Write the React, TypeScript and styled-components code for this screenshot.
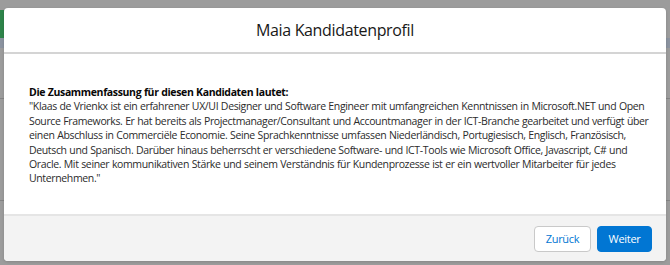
import React from "react";
import styled, { createGlobalStyle } from "styled-components";

const GlobalStyle = createGlobalStyle`
  html, body {
    margin: 0;
    padding: 0;
    width: 670px;
    height: 265px;
    overflow: hidden;
    background: #9a9a9a;
    font-family: "Open Sans", "Noto Sans", Arial, sans-serif;
  }
`;

const Page = styled.div`
  position: relative;
  width: 670px;
  height: 265px;
  overflow: hidden;
  background: #9c9c9c;
`;

const BackdropRows = styled.div`
  display: flex;
  flex-direction: column;
`;

const BackdropRow = styled.div<{ $h: number; $bg: string }>`
  height: ${(p) => p.$h}px;
  background: ${(p) => p.$bg};
  display: flex;
  align-items: flex-end;
`;

const GreenTab = styled.div`
  width: 4px;
  height: 28px;
  background: #2e844a;
`;

const Modal = styled.div`
  position: absolute;
  top: 8px;
  left: 4px;
  width: 662px;
  height: 253px;
  display: flex;
  flex-direction: column;
  background: #fff;
  border-radius: 4px;
  overflow: hidden;
  box-shadow: 0 1px 3px rgba(0, 0, 0, 0.15);
`;

const Header = styled.div`
  height: 44px;
  display: flex;
  align-items: center;
  justify-content: center;
  border-bottom: 2px solid #d4d4d4;
`;

const Title = styled.h2`
  margin: 0;
  font-weight: 400;
  font-size: 16px;
  color: #181818;
  letter-spacing: -0.35px;
`;

const Body = styled.div`
  flex: 1;
  padding: 31px 25px 0 25px;
  font-size: 10.5px;
  line-height: 14.4px;
  letter-spacing: -0.36px;
  word-spacing: 0.3px;
  color: #2b2b2b;
`;

const Lead = styled.div`
  font-weight: 700;
  color: #080707;
`;

const Line = styled.div`
  white-space: nowrap;
`;

const Footer = styled.div`
  height: 45px;
  display: flex;
  align-items: center;
  justify-content: flex-end;
  gap: 6px;
  padding: 0 14px;
  background: #f3f3f3;
  border-top: 2px solid #e5e5e5;
`;

const Button = styled.button<{ $primary?: boolean }>`
  height: 26px;
  width: ${(p) => (p.$primary ? 55 : 57)}px;
  padding: 0;
  border-radius: 4px;
  font-family: inherit;
  font-size: 11px;
  letter-spacing: -0.3px;
  cursor: pointer;
  border: 1px solid ${(p) => (p.$primary ? "#0176d3" : "#c9c9c9")};
  background: ${(p) => (p.$primary ? "#0176d3" : "#fff")};
  color: ${(p) => (p.$primary ? "#fff" : "#0176d3")};
`;

const rows = [
  { h: 38, bg: "#9c9c9c" },
  { h: 10, bg: "#8b93a0" },
  { h: 50, bg: "#9c9c9c" },
  { h: 1, bg: "#848484" },
  { h: 101, bg: "#9c9c9c" },
  { h: 1, bg: "#848484" },
  { h: 64, bg: "#9c9c9c" },
];

const summary = [
  "\"Klaas de Vrienkx ist ein erfahrener UX/UI Designer und Software Engineer mit umfangreichen Kenntnissen in Microsoft.NET und Open",
  "Source Frameworks. Er hat bereits als Projectmanager/Consultant und Accountmanager in der ICT-Branche gearbeitet und verfügt über",
  "einen Abschluss in Commerciële Economie. Seine Sprachkenntnisse umfassen Niederländisch, Portugiesisch, Englisch, Französisch,",
  "Deutsch und Spanisch. Darüber hinaus beherrscht er verschiedene Software- und ICT-Tools wie Microsoft Office, Javascript, C# und",
  "Oracle. Mit seiner kommunikativen Stärke und seinem Verständnis für Kundenprozesse ist er ein wertvoller Mitarbeiter für jedes",
  "Unternehmen.\"",
];

export default function App() {
  return (
    <>
      <GlobalStyle />
      <Page>
        <BackdropRows>
          {rows.map((r, i) => (
            <BackdropRow key={i} $h={r.h} $bg={r.bg}>
              {i === 0 && <GreenTab />}
            </BackdropRow>
          ))}
        </BackdropRows>
        <Modal>
          <Header>
            <Title>Maia Kandidatenprofil</Title>
          </Header>
          <Body>
            <Lead>Die Zusammenfassung für diesen Kandidaten lautet:</Lead>
            {summary.map((line, i) => (
              <Line key={i}>{line}</Line>
            ))}
          </Body>
          <Footer>
            <Button>Zurück</Button>
            <Button $primary>Weiter</Button>
          </Footer>
        </Modal>
      </Page>
    </>
  );
}
